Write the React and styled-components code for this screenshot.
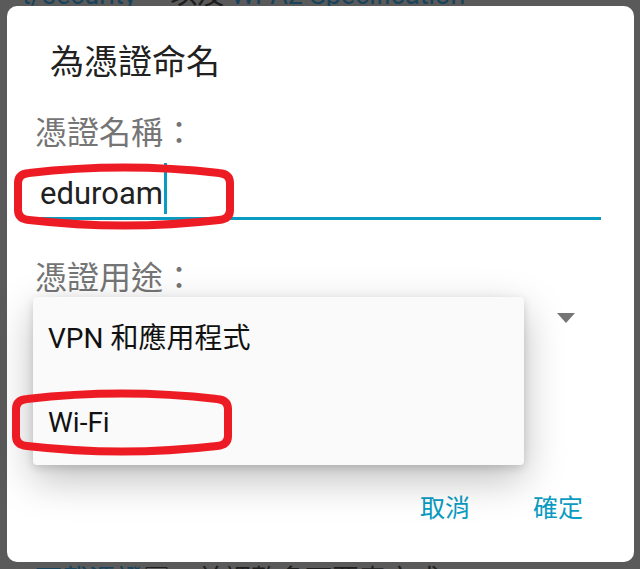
import React from 'react'
import styled, { createGlobalStyle } from 'styled-components'

const teal = '#0a9bc1'
const font = `Roboto, "Noto Sans CJK TC", sans-serif`

const Global = createGlobalStyle`
  body {
    margin: 0;
    background: #5a5a5a;
    font-family: ${font};
  }
`

export default () => {
  return (
    <Screen>
      <Global />
      <PageLine top>
        <Link>t/security</Link> 。以及 <Link>WPA2 Specification</Link>
      </PageLine>
      <PageLine bottom>
        <Link>下載憑證</Link>□　並調整多可要表方式
      </PageLine>

      <Dialog>
        <Title>為憑證命名</Title>
        <Label first>憑證名稱：</Label>
        <Field>
          <Value>eduroam</Value>
          <Caret />
        </Field>
        <Label>憑證用途：</Label>
        <SelectRow>
          <Arrow />
        </SelectRow>
        <Actions>
          <ActionButton>取消</ActionButton>
          <ActionButton>確定</ActionButton>
        </Actions>

        <Menu>
          <MenuItem>VPN 和應用程式</MenuItem>
          <MenuItem>Wi-Fi</MenuItem>
        </Menu>
      </Dialog>

      <Mark x={14} y={162} />
      <Mark x={12} y={388} />
    </Screen>
  )
}

const Mark = ({ x, y }) => (
  <Circle style={{ left: x, top: y }} width='220' height='69' viewBox='0 0 220 69'>
    <path
      d='M4 21 Q4 12 15 11 Q110 0 205 11 Q216 12 216 21 L216 48 Q216 57 205 58 Q110 69 15 58 Q4 57 4 48 Z'
      fill='none'
      stroke='#ed1c24'
      strokeWidth='8'
    />
  </Circle>
)

const Screen = styled.div`
  position: relative;
  width: 640px;
  height: 569px;
  overflow: hidden;
  background: #5a5a5a;
  display: flex;
  flex-direction: column;
`

const PageLine = styled.div`
  font-size: 27px;
  line-height: 34px;
  color: #1e1e1e;
  white-space: nowrap;
  padding-left: ${p => (p.top ? 22 : 35)}px;
  margin-top: ${p => (p.top ? '-22px' : 'auto')};
  margin-bottom: ${p => (p.bottom ? '-28px' : '0')};
`

const Link = styled.span`
  color: #17435c;
`

const Dialog = styled.div`
  position: absolute;
  left: 7px;
  top: 6px;
  width: 627px;
  height: 556px;
  box-sizing: border-box;
  background: #fff;
  border-radius: 10px;
  padding: 0 33px 0 28px;
  display: flex;
  flex-direction: column;
`

const Title = styled.div`
  font-size: 34px;
  line-height: 40px;
  color: #212121;
  margin: 36px 0 0 15px;
`

const Label = styled.div`
  font-size: 32px;
  line-height: 38px;
  color: #757575;
  margin-top: ${p => (p.first ? 32 : 39)}px;
`

const Field = styled.div`
  display: flex;
  align-items: flex-end;
  margin-top: 11px;
  padding: 0 0 3px 5px;
  border-bottom: 3px solid ${teal};
`

const Value = styled.span`
  font-size: 31px;
  line-height: 40px;
  color: #212121;
`

const Caret = styled.span`
  width: 3px;
  height: 51px;
  margin-left: 1px;
  background: ${teal};
`

const SelectRow = styled.div`
  height: 42px;
  display: flex;
  align-items: center;
  justify-content: flex-end;
  padding-right: 26px;
`

const Arrow = styled.span`
  width: 0;
  height: 0;
  border-left: 9px solid transparent;
  border-right: 9px solid transparent;
  border-top: 10px solid #757575;
`

const Actions = styled.div`
  display: flex;
  justify-content: flex-end;
  gap: 63px;
  padding-right: 18px;
  margin-top: 155px;
`

const ActionButton = styled.span`
  font-size: 25px;
  line-height: 30px;
  color: ${teal};
`

const Menu = styled.div`
  position: absolute;
  left: 26px;
  top: 291px;
  width: 491px;
  background: #fafafa;
  border-radius: 4px;
  box-shadow: 0 14px 40px rgba(0, 0, 0, 0.26), 0 3px 8px rgba(0, 0, 0, 0.14);
`

const MenuItem = styled.div`
  height: 84px;
  line-height: 84px;
  padding-left: 15px;
  font-size: 28px;
  color: #111;
`

const Circle = styled.svg`
  position: absolute;
  display: block;
`
